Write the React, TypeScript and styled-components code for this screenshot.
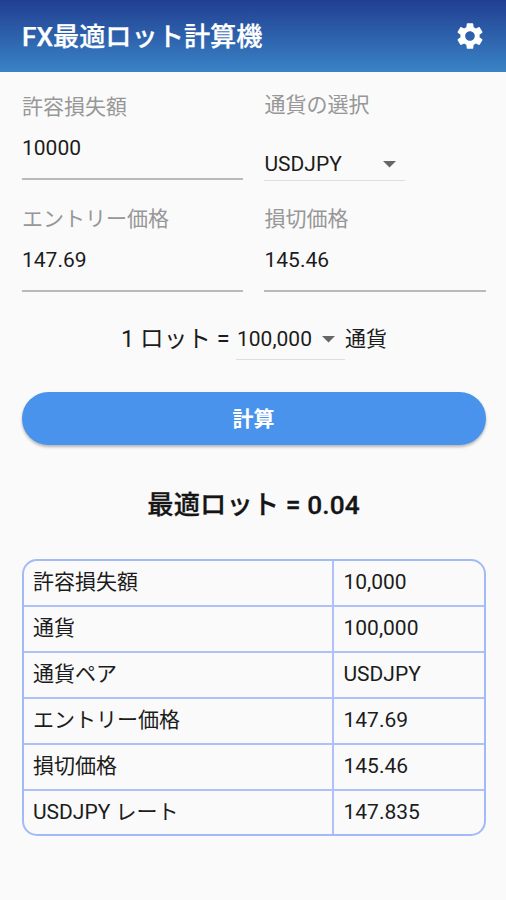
import React from "react";
import styled, { createGlobalStyle } from "styled-components";

const GlobalStyle = createGlobalStyle`
  * { box-sizing: border-box; }
  body {
    margin: 0;
    background: #fafafa;
    color: #1c1c1c;
    font-family: Roboto, "Noto Sans CJK JP", sans-serif;
    font-size: 21px;
  }
`;

const Screen = styled.div`
  width: 100%;
  height: 900px;
  overflow: hidden;
  background: #fafafa;
`;

const AppBar = styled.header`
  display: flex;
  align-items: center;
  justify-content: space-between;
  height: 72px;
  padding: 0 20px 0 22px;
  background: linear-gradient(#213f92, #3983c5);
  color: #fff;
`;

const Title = styled.h1`
  margin: 0;
  font-size: 26.2px;
  font-weight: 500;
  line-height: 32px;
  padding-top: 2px;
  -webkit-text-stroke: 0.25px currentColor;
`;

const GearButton = styled.button`
  display: flex;
  padding: 0;
  border: 0;
  background: none;
  color: inherit;
`;

const Content = styled.main`
  padding: 0 20.5px 0 21.5px;
`;

const FieldGrid = styled.div`
  display: grid;
  grid-template-columns: 1fr 1fr;
  column-gap: 21px;
  grid-template-rows: 112px 108px;
`;

const Field = styled.label`
  display: flex;
  flex-direction: column;
  padding-top: 20px;
`;

const Caption = styled.span<{ $raised?: boolean }>`
  height: 30px;
  margin-top: ${(p) => (p.$raised ? "-2px" : "0")};
  padding-left: 0.5px;
  line-height: 30px;
  color: #979797;
`;

const Input = styled.input`
  width: 100%;
  height: 58px;
  padding: 0 0 5px 0.5px;
  border: 0;
  border-bottom: 2px solid #bababa;
  background: none;
  color: #1c1c1c;
  font: inherit;
  outline: none;
`;

const Dropdown = styled.div<{ $width: number; $compact?: boolean }>`
  display: flex;
  align-items: center;
  justify-content: space-between;
  width: ${(p) => p.$width}px;
  height: ${(p) => (p.$compact ? 41 : 33)}px;
  margin-top: ${(p) => (p.$compact ? 0 : 28)}px;
  padding: ${(p) => (p.$compact ? "0 10px 0 1px" : "0 9px 0 0.5px")};
  border-bottom: 1px solid #dedede;
`;

const LotRow = styled.div`
  display: flex;
  align-items: flex-start;
  height: 73px;
  margin: 27px 0 0 99.5px;
  line-height: 41px;
  white-space: pre;
`;

const LotLabel = styled.span`
  width: 115px;
  font-size: 23.6px;
`;

const SubmitButton = styled.button`
  display: block;
  width: 100%;
  height: 53px;
  padding: 0 0 4px;
  border: 0;
  border-radius: 27px;
  background: #4993ec;
  box-shadow: 0 2px 3px rgba(0, 0, 0, 0.28);
  color: #fff;
  font: inherit;
  font-weight: 700;
`;

const Result = styled.p`
  margin: 40px 0 0;
  height: 40px;
  line-height: 40px;
  text-align: center;
  font-size: 26.3px;
  font-weight: 500;
  letter-spacing: 0.08px;
  color: #151515;
  -webkit-text-stroke: 0.3px currentColor;
`;

const Table = styled.div`
  margin-top: 34px;
  border: 2px solid #a3baf8;
  border-radius: 15px;
  overflow: hidden;
`;

const Row = styled.div`
  display: grid;
  grid-template-columns: 308.5px 1fr;
  height: 46px;
  border-top: 2px solid #aec2f9;

  &:first-child {
    height: 44px;
    border-top: 0;
  }

  &:last-child {
    height: 45px;
  }
`;

const Cell = styled.div<{ $value?: boolean }>`
  padding: ${(p) => (p.$value ? "0 0 0 9.5px" : "0 0 0 9.5px")};
  border-left: ${(p) => (p.$value ? "2px solid #aec2f9" : "0")};
  line-height: 43px;
`;

const Caret = () => (
  <svg width="13" height="7" viewBox="0 0 13 7">
    <path d="M0 0H13L6.5 6.6Z" fill="#666" />
  </svg>
);

const Gear = () => (
  <svg width="32" height="32" viewBox="0 0 24 24" fill="currentColor">
    <path d="M19.14 12.94c.04-.3.06-.61.06-.94 0-.32-.02-.64-.07-.94l2.03-1.58c.18-.14.23-.41.12-.61l-1.92-3.32c-.12-.22-.37-.29-.59-.22l-2.39.96c-.5-.38-1.03-.7-1.62-.94l-.36-2.54c-.04-.24-.24-.41-.48-.41h-3.84c-.24 0-.43.17-.47.41l-.36 2.54c-.59.24-1.13.57-1.62.94l-2.39-.96c-.22-.08-.47 0-.59.22L2.74 8.87c-.12.21-.08.47.12.61l2.03 1.58c-.05.3-.09.63-.09.94s.02.64.07.94l-2.03 1.58c-.18.14-.23.41-.12.61l1.92 3.32c.12.22.37.29.59.22l2.39-.96c.5.38 1.03.7 1.62.94l.36 2.54c.05.24.24.41.48.41h3.84c.24 0 .44-.17.47-.41l.36-2.54c.59-.24 1.13-.56 1.62-.94l2.39.96c.22.08.47 0 .59-.22l1.92-3.32c.12-.22.07-.47-.12-.61l-2.01-1.58zM12 15.6c-1.98 0-3.6-1.62-3.6-3.6s1.62-3.6 3.6-3.6 3.6 1.62 3.6 3.6-1.62 3.6-3.6 3.6z" />
  </svg>
);

const rows = [
  ["許容損失額", "10,000"],
  ["通貨", "100,000"],
  ["通貨ペア", "USDJPY"],
  ["エントリー価格", "147.69"],
  ["損切価格", "145.46"],
  ["USDJPY レート", "147.835"],
];

export default function App() {
  return (
    <Screen lang="ja">
      <GlobalStyle />
      <AppBar>
        <Title>FX最適ロット計算機</Title>
        <GearButton aria-label="設定">
          <Gear />
        </GearButton>
      </AppBar>
      <Content>
        <FieldGrid>
          <Field>
            <Caption>許容損失額</Caption>
            <Input defaultValue="10000" />
          </Field>
          <Field as="div">
            <Caption $raised>通貨の選択</Caption>
            <Dropdown $width={141}>
              USDJPY
              <Caret />
            </Dropdown>
          </Field>
          <Field>
            <Caption>エントリー価格</Caption>
            <Input defaultValue="147.69" />
          </Field>
          <Field>
            <Caption>損切価格</Caption>
            <Input defaultValue="145.46" />
          </Field>
        </FieldGrid>
        <LotRow>
          <LotLabel>1 ロット = </LotLabel>
          <Dropdown $width={109} $compact>
            100,000
            <Caret />
          </Dropdown>
          通貨
        </LotRow>
        <SubmitButton>計算</SubmitButton>
        <Result>最適ロット = 0.04</Result>
        <Table>
          {rows.map(([name, value]) => (
            <Row key={name}>
              <Cell>{name}</Cell>
              <Cell $value>{value}</Cell>
            </Row>
          ))}
        </Table>
      </Content>
    </Screen>
  );
}
